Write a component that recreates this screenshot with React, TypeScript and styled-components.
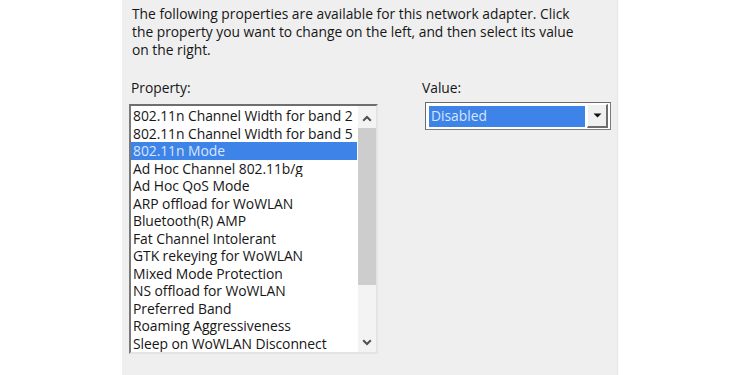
import React from "react";
import styled, { createGlobalStyle } from "styled-components";

const GlobalStyle = createGlobalStyle`
  html, body { margin: 0; padding: 0; background: #ffffff; }
  body { font-family: "Open Sans", "Noto Sans", Arial, sans-serif; }
  * { box-sizing: border-box; }
`;

const Page = styled.div`
  width: 750px;
  height: 375px;
  padding-left: 122px;
  background: #ffffff;
  overflow: hidden;
`;

const Panel = styled.div`
  width: 495px;
  height: 375px;
  background: #efefef;
  padding: 5px 0 0 7px;
  color: #161616;
  font-size: 13.8px;
  box-shadow: 1px 0 1px #e6e6e6;
`;

const Intro = styled.p`
  margin: 0;
  padding-left: 3px;
  line-height: 18px;
`;

const Columns = styled.div`
  display: flex;
  gap: 44px;
  margin-top: 20px;
`;

const Column = styled.div<{ $w: number }>`
  width: ${(p) => p.$w}px;
  flex: 0 0 auto;
  display: flex;
  flex-direction: column;
`;

const Label = styled.div<{ $pad: number }>`
  line-height: 18px;
  padding-left: ${(p) => p.$pad}px;
  margin-bottom: 7px;
`;

const ListBox = styled.div`
  height: 250px;
  display: flex;
  background: #ffffff;
  border-top: 2px solid #6e6e6e;
  border-left: 2px solid #7a7a7a;
  border-right: 2px solid #e4e4e4;
  border-bottom: 2px solid #e4e4e4;
`;

const Items = styled.div`
  flex: 1;
  min-width: 0;
  padding-top: 1px;
  overflow: hidden;
  font-size: 13.9px;
  letter-spacing: -0.06px;
`;

const Item = styled.div<{ $sel?: boolean }>`
  height: 17.5px;
  line-height: 17.5px;
  padding-left: 2px;
  margin-right: 1px;
  white-space: nowrap;
  overflow: hidden;
  background: ${(p) => (p.$sel ? "#3e83e7" : "transparent")};
  color: ${(p) => (p.$sel ? "#d6e6ff" : "#161616")};
`;

const ScrollBar = styled.div`
  width: 18px;
  flex: 0 0 auto;
  display: flex;
  flex-direction: column;
  background: #f3f3f3;
`;

const ArrowBox = styled.div<{ $top: number }>`
  height: 20px;
  padding-top: ${(p) => p.$top}px;
  display: flex;
  align-items: center;
  justify-content: center;
`;

const Track = styled.div`
  flex: 1;
  padding-top: 2px;
  display: flex;
  flex-direction: column;
`;

const Thumb = styled.div`
  height: 157px;
  background: #cdcdcd;
`;

const Combo = styled.div`
  width: 186px;
  height: 28px;
  margin-left: 3px;
  margin-top: -2px;
  display: flex;
  align-items: stretch;
  background: #ffffff;
  border: 1px solid #7d7d7d;
  border-top-color: #6a6a6a;
  border-left-color: #6a6a6a;
  padding: 3px 2px 2px 3px;
`;

const ComboText = styled.div`
  flex: 1;
  background: #3e83e7;
  color: #d6e6ff;
  line-height: 20px;
  padding-left: 2px;
`;

const DropButton = styled.div`
  width: 21px;
  margin-left: 2px;
  margin-top: -2px;
  margin-bottom: -1px;
  background: #f0f0f0;
  border-top: 1px solid #ffffff;
  border-left: 1px solid #ffffff;
  border-right: 2px solid #6d6d6d;
  border-bottom: 2px solid #6d6d6d;
  display: flex;
  align-items: center;
  justify-content: center;
`;

const Chevron = ({ up }: { up?: boolean }) => (
  <svg width="10" height="7" viewBox="0 0 10 7">
    <path
      d={up ? "M1.2 5.8 L5 2 L8.8 5.8" : "M1.2 1.2 L5 5 L8.8 1.2"}
      fill="none"
      stroke="#505050"
      strokeWidth="2"
    />
  </svg>
);

const DownTriangle = () => (
  <svg width="9" height="5" viewBox="0 0 9 5">
    <path d="M0.5 0.5 L8.5 0.5 L4.5 4.5 Z" fill="#111111" />
  </svg>
);

const items = [
  "802.11n Channel Width for band 2",
  "802.11n Channel Width for band 5",
  "802.11n Mode",
  "Ad Hoc Channel 802.11b/g",
  "Ad Hoc QoS Mode",
  "ARP offload for WoWLAN",
  "Bluetooth(R) AMP",
  "Fat Channel Intolerant",
  "GTK rekeying for WoWLAN",
  "Mixed Mode Protection",
  "NS offload for WoWLAN",
  "Preferred Band",
  "Roaming Aggressiveness",
  "Sleep on WoWLAN Disconnect",
];

export default function App() {
  return (
    <>
      <GlobalStyle />
      <Page>
        <Panel>
          <Intro>
            The following properties are available for this network adapter. Click
            <br />
            the property you want to change on the left, and then select its value
            <br />
            on the right.
          </Intro>
          <Columns>
            <Column $w={249}>
              <Label $pad={2}>Property:</Label>
              <ListBox>
                <Items>
                  {items.map((t, i) => (
                    <Item key={t} $sel={i === 2}>
                      {t}
                    </Item>
                  ))}
                </Items>
                <ScrollBar>
                  <ArrowBox $top={4}>
                    <Chevron up />
                  </ArrowBox>
                  <Track>
                    <Thumb />
                  </Track>
                  <ArrowBox $top={0}>
                    <Chevron />
                  </ArrowBox>
                </ScrollBar>
              </ListBox>
            </Column>
            <Column $w={192}>
              <Label $pad={0}>Value:</Label>
              <Combo>
                <ComboText>Disabled</ComboText>
                <DropButton>
                  <DownTriangle />
                </DropButton>
              </Combo>
            </Column>
          </Columns>
        </Panel>
      </Page>
    </>
  );
}
